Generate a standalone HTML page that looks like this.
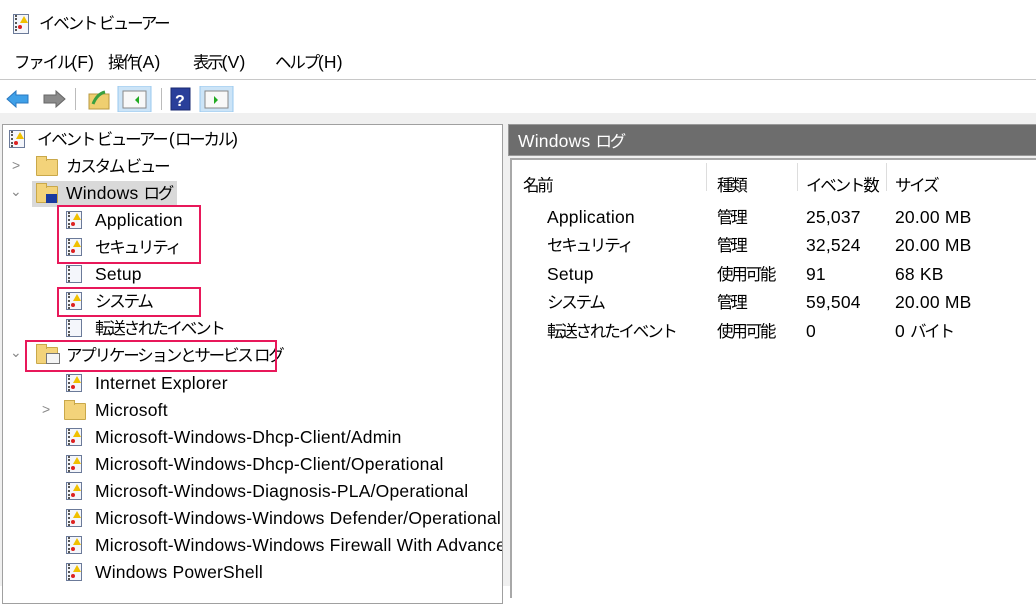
<!DOCTYPE html>
<html><head><meta charset="utf-8"><style>
*{margin:0;padding:0;box-sizing:border-box}
body{width:1036px;height:586px;overflow:hidden;background:#fff;font-family:"Liberation Sans","Noto Sans CJK JP",sans-serif;color:#000;position:relative}
.a{position:absolute;white-space:nowrap}
.t{font-size:17.5px;line-height:24px;letter-spacing:0.2px}
.j{font-size:16.5px;letter-spacing:-2.2px}
.ic{position:absolute;width:16px;height:18px;border:1px solid #6b7a99;background:#f4f6fb}
.ic:before{content:"";position:absolute;left:1px;top:0;width:2px;height:16px;border-left:2px dotted #555}
.ic.w:after{content:"";position:absolute;left:6px;top:1px;width:0;height:0;border-left:4px solid transparent;border-right:4px solid transparent;border-bottom:7px solid #f0c000}
.ic .d{position:absolute;left:4px;top:10px;width:4px;height:4px;background:#d22;border-radius:50%}
.fd{position:absolute;width:22px;height:17px;background:#f3d37a;border:1px solid #c9a84a;border-radius:1px}
.fd:before{content:"";position:absolute;left:-1px;top:-4px;width:9px;height:4px;background:#f3d37a;border:1px solid #c9a84a;border-bottom:none}
.box{position:absolute;border:2px solid #e8185a}
.chev{position:absolute;font-size:14px;color:#888}
</style></head><body>
<!-- title -->
<div class="ic w" style="left:13px;top:14px;height:20px"><span class="d"></span></div>
<div class="a t" style="left:39px;top:11px"><span class="j">イベント ビューアー</span></div>
<!-- menu -->
<div class="a t" style="left:14px;top:50px"><span class="j">ファイル</span>(F)</div>
<div class="a t" style="left:108px;top:50px"><span class="j">操作</span>(A)</div>
<div class="a t" style="left:193px;top:50px"><span class="j">表示</span>(V)</div>
<div class="a t" style="left:275px;top:50px"><span class="j">ヘルプ</span>(H)</div>
<div class="a" style="left:0;top:79px;width:1036px;height:1px;background:#c8c8c8"></div>
<!-- toolbar -->
<svg class="a" style="left:5px;top:86px" width="230" height="26">
<path d="M2 13 L11 5 L11 9 L23 9 L23 17 L11 17 L11 21 Z" fill="#3fa0e8" stroke="#2a78c0"/>
<path d="M60 13 L51 5 L51 9 L39 9 L39 17 L51 17 L51 21 Z" fill="#8a8a8a" stroke="#666"/>
<rect x="70" y="2" width="1" height="22" fill="#bbb"/>
<rect x="84" y="8" width="20" height="15" fill="#efcf70" stroke="#b89a40"/>
<path d="M88 18 Q92 8 100 6" stroke="#3aa040" stroke-width="3" fill="none"/>
<rect x="113" y="0" width="33" height="26" fill="#cce4f7" stroke="#99c9ef"/>
<rect x="118" y="5" width="23" height="17" fill="#f8f8f8" stroke="#888"/>
<path d="M134 10 L130 14 L134 18Z" fill="#2a2"/>
<rect x="156" y="2" width="1" height="22" fill="#bbb"/>
<rect x="166" y="2" width="19" height="22" fill="#2a3f9a" stroke="#1a2a70"/>
<text x="170" y="20" font-size="16" fill="#fff" font-family="Liberation Sans" font-weight="bold">?</text>
<rect x="195" y="0" width="33" height="26" fill="#cce4f7" stroke="#99c9ef"/>
<rect x="200" y="5" width="23" height="17" fill="#f8f8f8" stroke="#888"/>
<path d="M209 10 L213 14 L209 18Z" fill="#2a2"/>
</svg>
<div class="a" style="left:0;top:113px;width:1036px;height:473px;background:#f0f0f0"></div>
<!-- left pane -->
<div class="a" style="left:2px;top:124px;width:501px;height:480px;background:#fff;border:1px solid #a0a0a0"></div>
<!-- right pane -->
<div class="a" style="left:508px;top:124px;width:540px;height:32px;background:#6d6d6d;border:1px solid #999"></div>
<div class="a t" style="left:518px;top:129px;color:#fff">Windows <span class="j">ログ</span></div>
<div class="a" style="left:510px;top:158px;width:540px;height:440px;background:#fff;border:2px solid #a8a8a8;border-right:none;border-bottom:none"></div>
<div class="a" style="left:706px;top:163px;width:1px;height:28px;background:#ddd"></div>
<div class="a" style="left:797px;top:163px;width:1px;height:28px;background:#ddd"></div>
<div class="a" style="left:886px;top:163px;width:1px;height:28px;background:#ddd"></div>
<div class="a t" style="left:523px;top:173px"><span class="j">名前</span></div>
<div class="a t" style="left:717px;top:173px"><span class="j">種類</span></div>
<div class="a t" style="left:806px;top:173px"><span class="j">イベント数</span></div>
<div class="a t" style="left:895px;top:173px"><span class="j">サイズ</span></div>
<div class="a t" style="left:547px;top:205px">Application</div><div class="a t" style="left:717px;top:205px"><span class="j">管理</span></div><div class="a t" style="left:806px;top:205px">25,037</div><div class="a t" style="left:895px;top:205px">20.00 MB</div>
<div class="a t" style="left:547px;top:233px"><span class="j">セキュリティ</span></div><div class="a t" style="left:717px;top:233px"><span class="j">管理</span></div><div class="a t" style="left:806px;top:233px">32,524</div><div class="a t" style="left:895px;top:233px">20.00 MB</div>
<div class="a t" style="left:547px;top:262px">Setup</div><div class="a t" style="left:717px;top:262px"><span class="j">使用可能</span></div><div class="a t" style="left:806px;top:262px">91</div><div class="a t" style="left:895px;top:262px">68 KB</div>
<div class="a t" style="left:547px;top:290px"><span class="j">システム</span></div><div class="a t" style="left:717px;top:290px"><span class="j">管理</span></div><div class="a t" style="left:806px;top:290px">59,504</div><div class="a t" style="left:895px;top:290px">20.00 MB</div>
<div class="a t" style="left:547px;top:319px"><span class="j">転送されたイベント</span></div><div class="a t" style="left:717px;top:319px"><span class="j">使用可能</span></div><div class="a t" style="left:806px;top:319px">0</div><div class="a t" style="left:895px;top:319px">0 <span class="j">バイト</span></div>
<!-- tree -->
<div class="ic w" style="left:9px;top:130px"><span class="d"></span></div>
<div class="a t" style="left:37px;top:127px"><span class="j">イベント ビューアー </span>(<span class="j">ローカル</span>)</div>
<div class="chev" style="left:12px;top:157px">&gt;</div>
<div class="fd" style="left:36px;top:159px"></div>
<div class="a t" style="left:66px;top:154px"><span class="j">カスタム ビュー</span></div>
<div class="a" style="left:32px;top:181px;width:145px;height:26px;background:#d9d9d9"></div>
<div class="chev" style="left:10px;top:183px">⌄</div>
<div class="fd" style="left:36px;top:186px"></div>
<div class="a" style="left:46px;top:194px;width:11px;height:9px;background:#1a3aa0"></div>
<div class="a t" style="left:66px;top:181px">Windows <span class="j">ログ</span></div>
<div class="ic w" style="left:66px;top:211px"><span class="d"></span></div>
<div class="a t" style="left:95px;top:208px">Application</div>
<div class="ic w" style="left:66px;top:238px"><span class="d"></span></div>
<div class="a t" style="left:95px;top:235px"><span class="j">セキュリティ</span></div>
<div class="ic" style="left:66px;top:265px"></div>
<div class="a t" style="left:95px;top:262px">Setup</div>
<div class="ic w" style="left:66px;top:292px"><span class="d"></span></div>
<div class="a t" style="left:95px;top:289px"><span class="j">システム</span></div>
<div class="ic" style="left:66px;top:319px"></div>
<div class="a t" style="left:95px;top:316px"><span class="j">転送されたイベント</span></div>
<div class="chev" style="left:10px;top:344px">⌄</div>
<div class="fd" style="left:36px;top:347px"></div>
<div class="a" style="left:46px;top:353px;width:14px;height:11px;background:#f4f4f4;border:1px solid #777"></div>
<div class="a t" style="left:66px;top:343px"><span class="j">アプリケーションとサービス ログ</span></div>
<div class="ic w" style="left:66px;top:374px"><span class="d"></span></div>
<div class="a t" style="left:95px;top:371px">Internet Explorer</div>
<div class="chev" style="left:42px;top:401px">&gt;</div>
<div class="fd" style="left:64px;top:403px"></div>
<div class="a t" style="left:95px;top:398px">Microsoft</div>
<div class="ic w" style="left:66px;top:428px"><span class="d"></span></div>
<div class="a t" style="left:95px;top:425px">Microsoft-Windows-Dhcp-Client/Admin</div>
<div class="ic w" style="left:66px;top:455px"><span class="d"></span></div>
<div class="a t" style="left:95px;top:452px">Microsoft-Windows-Dhcp-Client/Operational</div>
<div class="ic w" style="left:66px;top:482px"><span class="d"></span></div>
<div class="a t" style="left:95px;top:479px">Microsoft-Windows-Diagnosis-PLA/Operational</div>
<div class="ic w" style="left:66px;top:509px"><span class="d"></span></div>
<div class="a t" style="left:95px;top:506px;width:407px;overflow:hidden">Microsoft-Windows-Windows Defender/Operational</div>
<div class="ic w" style="left:66px;top:536px"><span class="d"></span></div>
<div class="a t" style="left:95px;top:533px;width:407px;overflow:hidden">Microsoft-Windows-Windows Firewall With Advanced Security</div>
<div class="ic w" style="left:66px;top:563px"><span class="d"></span></div>
<div class="a t" style="left:95px;top:560px">Windows PowerShell</div>
<!-- red boxes -->
<div class="box" style="left:57px;top:205px;width:144px;height:59px"></div>
<div class="box" style="left:57px;top:287px;width:144px;height:30px"></div>
<div class="box" style="left:25px;top:340px;width:252px;height:32px"></div>
</body></html>
